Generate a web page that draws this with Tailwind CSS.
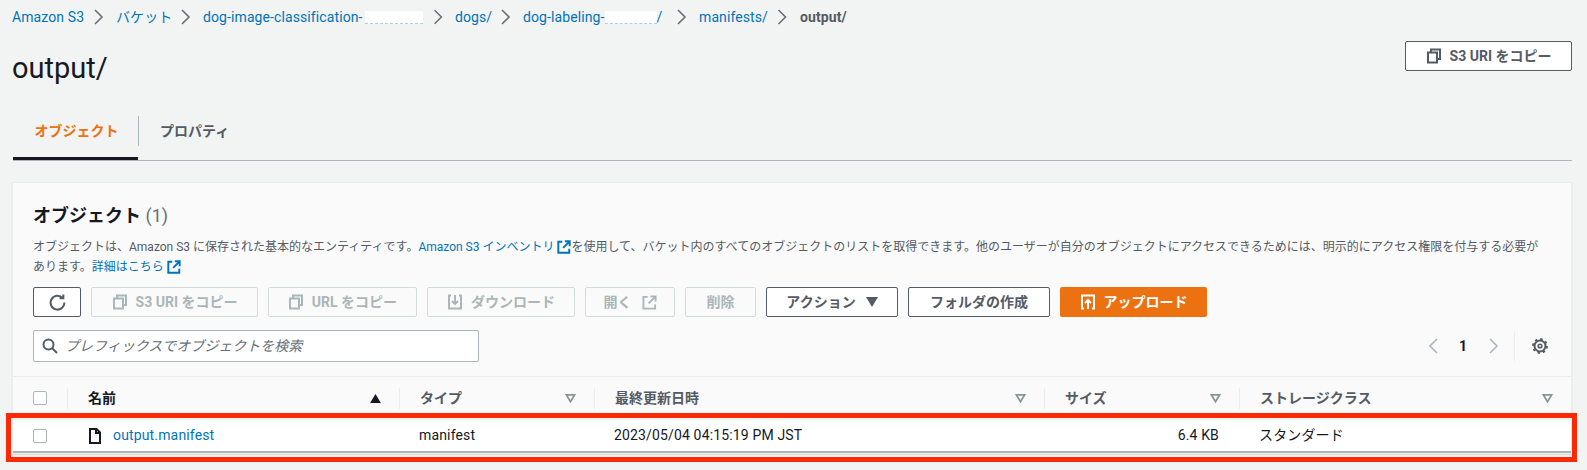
<!DOCTYPE html>
<html lang="ja">
<head>
    <meta charset="UTF-8">
    <title>output/</title>
    <script src="https://cdn.jsdelivr.net/npm/@tailwindcss/browser@4"></script>
</head>
<body class="bg-[#f2f3f3] text-[#16191f] font-['Roboto','Noto_Sans_CJK_JP',sans-serif] text-[14px] h-[470px] overflow-hidden relative">
    <!-- breadcrumb -->
    <nav class="h-[41px] pl-[12px] pb-[7px] flex items-center text-[14px] leading-[20px] text-[#0073bb] whitespace-nowrap tracking-[0.1px]">
        <a class="w-[71px] shrink-0">Amazon S3</a>
        <svg class="w-[33px] h-[18px] shrink-0" viewBox="0 0 33 18" fill="none" stroke="#687078" stroke-width="1.6"><path d="M12 2l7 7-7 7"/></svg>
        <a class="w-[54px] shrink-0">バケット</a>
        <svg class="w-[33px] h-[18px] shrink-0" viewBox="0 0 33 18" fill="none" stroke="#687078" stroke-width="1.6"><path d="M12 2l7 7-7 7"/></svg>
        <a class="w-[220px] shrink-0 flex items-center justify-between">dog-image-classification-<span class="w-[58px] h-[13px] bg-white border-b border-dashed border-[#a9d0ea]"></span></a>
        <svg class="w-[32px] h-[18px] shrink-0" viewBox="0 0 33 18" fill="none" stroke="#687078" stroke-width="1.6"><path d="M12 2l7 7-7 7"/></svg>
        <a class="w-[35px] shrink-0">dogs/</a>
        <svg class="w-[33px] h-[18px] shrink-0" viewBox="0 0 33 18" fill="none" stroke="#687078" stroke-width="1.6"><path d="M12 2l7 7-7 7"/></svg>
        <a class="w-[143px] shrink-0 flex items-center">dog-labeling-<span class="w-[52px] h-[13px] bg-white border-b border-dashed border-[#a9d0ea]"></span>/</a>
        <svg class="w-[33px] h-[18px] shrink-0" viewBox="0 0 33 18" fill="none" stroke="#687078" stroke-width="1.6"><path d="M12 2l7 7-7 7"/></svg>
        <a class="w-[67px] shrink-0">manifests/</a>
        <svg class="w-[34px] h-[18px] shrink-0" viewBox="0 0 33 18" fill="none" stroke="#687078" stroke-width="1.6"><path d="M12 2l7 7-7 7"/></svg>
        <span class="text-[#545b64] font-bold">output/</span>
    </nav>

    <!-- title -->
    <div class="flex justify-between pl-[12px] pr-[15px] h-[75px]">
        <h1 class="text-[29px] leading-[54px] text-[#16191f]">output/</h1>
        <button class="h-[30px] w-[167px] bg-white border border-[#545b64] rounded-[2px] flex items-center justify-center gap-[8px] font-bold text-[#545b64]">
            <svg class="w-[16px] h-[16px]" viewBox="0 0 16 16" fill="none" stroke="currentColor" stroke-width="2"><path d="M5 4V1.500h9V11h-3M2 4.500h9V14.500H2z"/></svg>
            <span>S3 URI をコピー</span>
        </button>
    </div>

    <!-- tabs -->
    <div class="ml-[13px] mr-[15px] h-[45px] flex border-b border-[#aab7b8] relative">
        <div class="w-[125px] h-[44px] flex items-center justify-center font-bold text-[#ec7211] border-b-[3px] border-[#16191f] pb-[10px] pl-[2px]">オブジェクト</div>
        <div class="absolute left-[125px] top-0 h-[30px] w-px bg-[#aab7b8]"></div>
        <div class="h-[44px] flex items-center pl-[22px] pb-[13px] font-bold text-[#545b64]">プロパティ</div>
    </div>

    <!-- objects card -->
    <section class="mt-[21px] ml-[12px] mr-[15px] bg-[#fafafa] border border-[#eaeded] shadow-[0_1px_1px_rgba(0,28,36,0.1)]">
        <div class="pl-[20px] pr-[20px] pt-[20px]">
            <h2 class="text-[18px] leading-[26px] font-bold">オブジェクト <span class="font-normal text-[#687078]">(1)</span></h2>
            <p class="mt-[8px] w-[1515px] text-[12px] leading-[20px] text-[#545b64]">オブジェクトは、Amazon S3 に保存された基本的なエンティティです。<a class="text-[#0073bb]">Amazon S3 インベントリ <svg class="inline w-[14px] h-[14px] align-[-3px]" viewBox="0 0 16 16" fill="none" stroke="currentColor" stroke-width="2.2"><path d="M6 2H1.500v12.500H14V10M9 1.500h5.500V7M14 2L7 9"/></svg></a>を使用して、バケット内のすべてのオブジェクトのリストを取得できます。他のユーザーが自分のオブジェクトにアクセスできるためには、明示的にアクセス権限を付与する必要があります。<a class="text-[#0073bb]">詳細はこちら <svg class="inline w-[14px] h-[14px] align-[-3px]" viewBox="0 0 16 16" fill="none" stroke="currentColor" stroke-width="2.2"><path d="M6 2H1.500v12.500H14V10M9 1.500h5.500V7M14 2L7 9"/></svg></a></p>

            <!-- toolbar -->
            <div class="mt-[10px] flex gap-[10px] font-bold">
                <button class="w-[48px] h-[30px] bg-white border border-[#545b64] rounded-[2px] flex items-center justify-center text-[#545b64]">
                    <svg class="w-[17px] h-[17px]" viewBox="0 0 16 16" fill="none" stroke="currentColor" stroke-width="1.900"><path d="M12.800 3.800A6.500 6.500 0 1 0 14.500 8M13.500 .500v3.500H10"/></svg>
                </button>
                <button class="w-[167px] h-[30px] bg-[#fafafa] border border-[#d5dbdb] rounded-[2px] flex items-center justify-center gap-[8px] text-[#aab7b8]">
                    <svg class="w-[16px] h-[16px]" viewBox="0 0 16 16" fill="none" stroke="currentColor" stroke-width="2"><path d="M5 4V1.500h9V11h-3M2 4.500h9V14.500H2z"/></svg>
                    <span>S3 URI をコピー</span>
                </button>
                <button class="w-[149px] h-[30px] bg-[#fafafa] border border-[#d5dbdb] rounded-[2px] flex items-center justify-center gap-[8px] text-[#aab7b8]">
                    <svg class="w-[16px] h-[16px]" viewBox="0 0 16 16" fill="none" stroke="currentColor" stroke-width="2"><path d="M5 4V1.500h9V11h-3M2 4.500h9V14.500H2z"/></svg>
                    <span>URL をコピー</span>
                </button>
                <button class="w-[148px] h-[30px] bg-[#fafafa] border border-[#d5dbdb] rounded-[2px] flex items-center justify-center gap-[8px] text-[#aab7b8]">
                    <svg class="w-[16px] h-[16px]" viewBox="0 0 16 16" fill="none" stroke="currentColor" stroke-width="2"><path d="M4 1.500H2v13h12v-13h-2M8 1v9M5 7l3 3 3-3"/></svg>
                    <span>ダウンロード</span>
                </button>
                <button class="w-[90px] h-[30px] bg-[#fafafa] border border-[#d5dbdb] rounded-[2px] flex items-center justify-center gap-[10px] text-[#aab7b8]">
                    <span>開く</span>
                    <svg class="w-[15px] h-[15px]" viewBox="0 0 16 16" fill="none" stroke="currentColor" stroke-width="2"><path d="M6 2H1.500v12.500H14V10M9 1.500h5.500V7M14 2L7 9"/></svg>
                </button>
                <button class="w-[71px] h-[30px] bg-[#fafafa] border border-[#d5dbdb] rounded-[2px] flex items-center justify-center text-[#aab7b8]">削除</button>
                <button class="w-[132px] h-[30px] bg-white border border-[#545b64] rounded-[2px] flex items-center justify-center gap-[10px] text-[#545b64]">
                    <span>アクション</span>
                    <svg class="w-[12px] h-[10px]" viewBox="0 0 12 10" fill="currentColor"><path d="M0 0h12L6 10z"/></svg>
                </button>
                <button class="w-[142px] h-[30px] bg-white border border-[#545b64] rounded-[2px] flex items-center justify-center text-[#545b64]">フォルダの作成</button>
                <button class="w-[147px] h-[30px] bg-[#ec7211] rounded-[2px] flex items-center justify-center gap-[8px] text-white">
                    <svg class="w-[16px] h-[16px]" viewBox="0 0 16 16" fill="none" stroke="currentColor" stroke-width="2"><path d="M4 14.500H2v-13h12v13h-2M8 15V6M5 9l3-3 3 3"/></svg>
                    <span>アップロード</span>
                </button>
            </div>

            <!-- search + pagination -->
            <div class="mt-[13px] flex justify-between items-center">
                <div class="w-[446px] h-[32px] bg-white border border-[#aab7b8] rounded-[2px] flex items-center pl-[8px] gap-[7px] text-[#687078] italic">
                    <svg class="w-[16px] h-[16px]" viewBox="0 0 16 16" fill="none" stroke="#545b64" stroke-width="2"><circle cx="6.500" cy="6.500" r="5"/><path d="M10 10l5 5"/></svg>
                    <span>プレフィックスでオブジェクトを検索</span>
                </div>
                <div class="flex items-center h-[32px]">
                    <svg class="w-[10px] h-[16px] mr-[21px]" viewBox="0 0 10 16" fill="none" stroke="#aab7b8" stroke-width="1.600"><path d="M9 1L2 8l7 7"/></svg>
                    <span class="font-bold w-[9px]">1</span>
                    <svg class="w-[10px] h-[16px] ml-[21px] mr-[15px]" viewBox="0 0 10 16" fill="none" stroke="#aab7b8" stroke-width="1.600"><path d="M1 1l7 7-7 7"/></svg>
                    <div class="w-px h-[30px] bg-[#eaeded] mr-[17px]"></div>
                    <svg class="w-[16px] h-[16px] mr-[3px]" viewBox="0 0 16 16" fill="none" stroke="#545b64"><circle cx="8" cy="8" r="5.500" stroke-width="2"/><circle cx="8" cy="8" r="7" stroke-width="1.800" stroke-dasharray="2.500 3"/><circle cx="8" cy="8" r="1.800" stroke-width="1.600"/></svg>
                </div>
            </div>
        </div>

        <!-- table -->
        <div class="mt-[14px] border-t border-[#eaeded]">
            <div class="grid grid-cols-[54px_332px_195px_450px_195px_1fr] h-[42px] items-center font-bold text-[#545b64]">
                <div class="pl-[20px]"><div class="w-[14px] h-[14px] bg-white border border-[#aab7b8] rounded-[2px]"></div></div>
                <div class="h-[21px] border-l border-[#eaeded] pl-[20px] pr-[18px] flex items-center justify-between text-[#16191f]">名前
                    <svg class="w-[11px] h-[9px]" viewBox="0 0 12 10" fill="#16191f"><path d="M0 10h12L6 0z"/></svg></div>
                <div class="h-[21px] border-l border-[#eaeded] pl-[20px] pr-[18px] flex items-center justify-between">タイプ
                    <svg class="w-[11px] h-[9px]" viewBox="0 0 12 10" fill="none" stroke="#879596" stroke-width="2"><path d="M1.500 1h9L6 8.500z"/></svg></div>
                <div class="h-[21px] border-l border-[#eaeded] pl-[20px] pr-[18px] flex items-center justify-between">最終更新日時
                    <svg class="w-[11px] h-[9px]" viewBox="0 0 12 10" fill="none" stroke="#879596" stroke-width="2"><path d="M1.500 1h9L6 8.500z"/></svg></div>
                <div class="h-[21px] border-l border-[#eaeded] pl-[20px] pr-[18px] flex items-center justify-between">サイズ
                    <svg class="w-[11px] h-[9px]" viewBox="0 0 12 10" fill="none" stroke="#879596" stroke-width="2"><path d="M1.500 1h9L6 8.500z"/></svg></div>
                <div class="h-[21px] border-l border-[#eaeded] pl-[20px] pr-[18px] flex items-center justify-between">ストレージクラス
                    <svg class="w-[11px] h-[9px]" viewBox="0 0 12 10" fill="none" stroke="#879596" stroke-width="2"><path d="M1.500 1h9L6 8.500z"/></svg></div>
            </div>
            <div class="grid grid-cols-[54px_332px_195px_450px_195px_1fr] h-[34px] items-center bg-white border-t border-[#eaeded] border-b-2 border-b-[#aab7b8] tracking-[0.15px]">
                <div class="pl-[20px]"><div class="w-[14px] h-[14px] bg-white border border-[#aab7b8] rounded-[2px]"></div></div>
                <div class="pl-[21px] flex items-center gap-[11px]">
                    <svg class="w-[14px] h-[16px]" viewBox="0 0 14 16" fill="none" stroke="#16191f" stroke-width="2"><path d="M2 1h6.500L12 4.500V15H2zM8 1v4h4"/></svg>
                    <a class="text-[#0073bb]">output.manifest</a>
                </div>
                <div class="pl-[20px]">manifest</div>
                <div class="pl-[20px]">2023/05/04 04:15:19 PM JST</div>
                <div class="pr-[20px] text-right">6.4 KB</div>
                <div class="pl-[20px]">スタンダード</div>
            </div>
        </div>
    </section>

    <!-- annotation -->
    <div class="absolute left-[6px] top-[413px] w-[1571px] h-[49px] border-[5px] border-[#fa2a05]"></div>
</body>
</html>
